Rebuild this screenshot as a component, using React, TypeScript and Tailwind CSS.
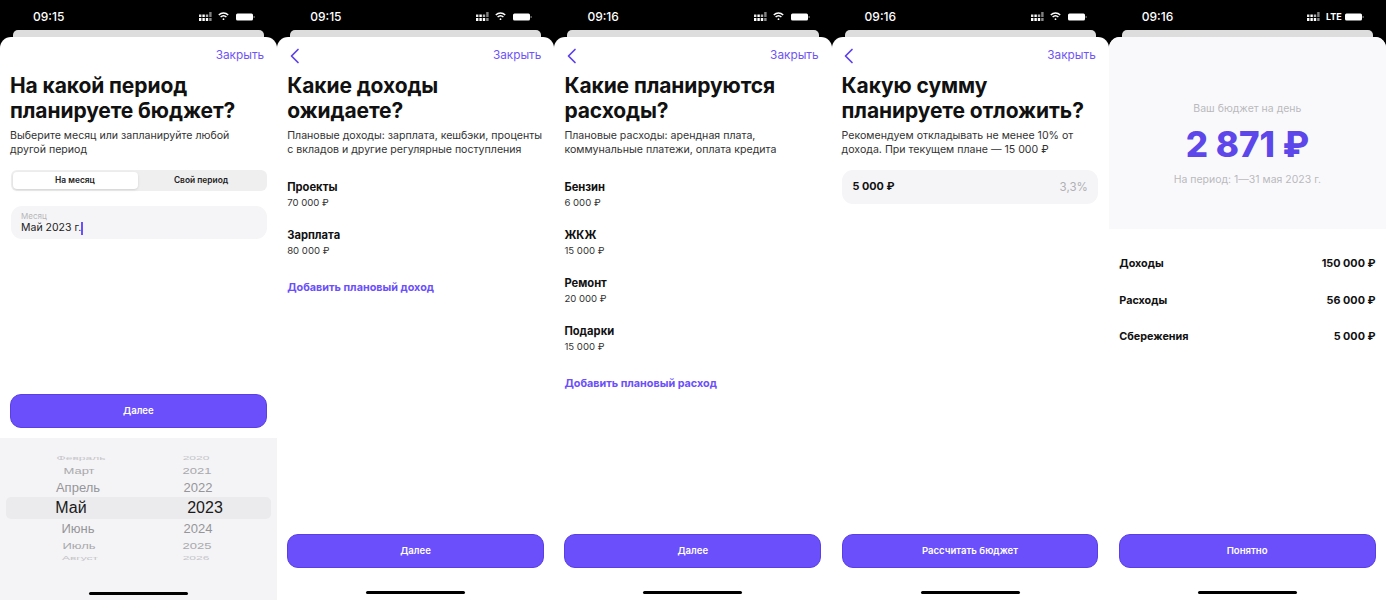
// App.tsx
import React from "react";

const SignalDots = () => (
  <svg width="14" height="10" viewBox="0 0 14 10" fill="#fff">
    <rect x="0" y="6" width="2.4" height="3" />
    <rect x="3.4" y="6" width="2.4" height="3" />
    <rect x="6.8" y="6" width="2.4" height="3" />
    <rect x="10.2" y="6" width="2.4" height="3" opacity="0.55" />
    <rect x="0" y="2.5" width="2.4" height="2.5" opacity="0.9" />
    <rect x="3.4" y="2.5" width="2.4" height="2.5" />
    <rect x="6.8" y="2.5" width="2.4" height="2.5" opacity="0.7" />
    <rect x="10.2" y="0" width="2.4" height="5" opacity="0.5" />
  </svg>
);

const Wifi = () => (
  <svg width="11" height="9" viewBox="0 0 11 9" fill="none" stroke="#fff" strokeWidth="1.5">
    <path d="M0.8 3 C3.5 0.4 7.5 0.4 10.2 3" />
    <path d="M2.6 5 C4.3 3.5 6.7 3.5 8.4 5" />
    <circle cx="5.5" cy="7.2" r="0.9" fill="#fff" stroke="none" />
  </svg>
);

const Battery = () => (
  <svg width="19" height="8" viewBox="0 0 19 8">
    <rect x="0" y="0.5" width="17" height="7" rx="1.5" fill="#fff" />
    <rect x="17.6" y="3" width="1" height="2" fill="#888" />
  </svg>
);

const StatusBar = ({ time, lte = false }: { time: string; lte?: boolean }) => (
  <div className="h-[30px] flex items-center pt-[3px] pl-[33px] pr-[22px] text-white">
    <span className="text-[12px] font-medium w-[167px]">{time}</span>
    <div className="flex items-center">
      <SignalDots />
      {lte ? (
        <span className="ml-[5px] mr-[5px] text-[9px] font-bold w-[14px]">LTE</span>
      ) : (
        <span className="ml-[5px] mr-[7px]">
          <Wifi />
        </span>
      )}
      <Battery />
    </div>
  </div>
);

const HomeBar = () => <div className="h-[3px] w-[99px] rounded-full bg-black mx-auto" />;

const Header = ({ back = true }: { back?: boolean }) => (
  <div className="h-[36px] flex items-center justify-between pl-[11.5px] pr-[13px] pt-[1px] shrink-0">
    {back ? (
      <svg width="12" height="16" viewBox="0 0 12 16" fill="none" stroke="#5b3ff0" strokeWidth="1.7" strokeLinecap="round" strokeLinejoin="round">
        <path d="M9 1.5 L2.5 8 L9 14.5" />
      </svg>
    ) : (
      <span />
    )}
    <span className="text-[11.8px] text-[#6f55f5]">Закрыть</span>
  </div>
);

const Title = ({ lines, sub }: { lines: string[]; sub: string[] }) => (
  <div className="px-[10px] whitespace-nowrap">
    <div className="text-[21px] leading-[25px] font-bold text-[#111] tracking-[-0.1px]">
      {lines.map((l) => (
        <div key={l}>{l}</div>
      ))}
    </div>
    <div className="mt-[6px] text-[10.6px] leading-[14px] text-[#333]">
      {sub.map((l) => (
        <div key={l}>{l}</div>
      ))}
    </div>
  </div>
);

const MainButton = ({ label }: { label: string }) => (
  <button className="ml-[10px] mr-[10.5px] h-[34px] shrink-0 rounded-[11px] bg-[#6b4ffb] border border-[#5a3ee6] text-white text-[9.6px] font-semibold">
    {label}
  </button>
);

const Budget = ({ title, amount }: { title: string; amount: string }) => (
  <div className="h-[48px]">
    <div className="text-[11.2px] leading-[15px] font-bold text-[#111]">{title}</div>
    <div className="text-[9.6px] leading-[15px] text-[#333]">{amount}</div>
  </div>
);

const Screen = ({ time, lte, children }: { time: string; lte?: boolean; children: React.ReactNode }) => (
  <div className="h-[600px] flex flex-col min-w-0">
    <StatusBar time={time} lte={lte} />
    <div className="h-[7px] mx-[13px] rounded-t-[5px] bg-[#dddddd] shrink-0" />
    <div className="flex-1 flex flex-col bg-white rounded-t-[11px] min-h-0">{children}</div>
  </div>
);

const BottomArea = ({ label }: { label: string }) => (
  <div className="mt-auto flex flex-col">
    <MainButton label={label} />
    <div className="h-[32px] flex items-end pb-[6px]">
      <HomeBar />
    </div>
  </div>
);

const pickerRows = [
  { m: "Февраль", y: "2020", cls: "h-[10px] text-[12px] text-[#c5c5c9] scale-y-50", mw: "w-[150px]", yw: "w-[80px]" },
  { m: "Март", y: "2021", cls: "h-[15px] text-[13px] text-[#a9a9ad] scale-y-75", mw: "w-[146px]", yw: "w-[90px]" },
  { m: "Апрель", y: "2022", cls: "h-[19px] text-[13px] text-[#96969a]", mw: "w-[144px]", yw: "w-[96px]" },
  { m: "Май", y: "2023", cls: "h-[22px] text-[16px] text-[#1a1a1a] rounded-[5px] bg-[#ebebed]", mw: "w-[130px]", yw: "w-[126px]" },
  { m: "Июнь", y: "2024", cls: "h-[18px] text-[13px] text-[#96969a]", mw: "w-[144px]", yw: "w-[96px]" },
  { m: "Июль", y: "2025", cls: "h-[17px] text-[13px] text-[#a9a9ad] scale-y-75", mw: "w-[146px]", yw: "w-[90px]" },
  { m: "Август", y: "2026", cls: "h-[8px] text-[12px] text-[#c5c5c9] scale-y-50", mw: "w-[148px]", yw: "w-[84px]" },
];

const Picker = () => (
  <div className="h-[162px] mt-[10px] bg-[#f4f4f6] flex flex-col pt-[15px] font-['Liberation_Sans',sans-serif]">
    {pickerRows.map((r) => (
      <div key={r.m} className={`flex items-center leading-none mx-[6px] ${r.cls}`}>
        <span className={`shrink-0 text-center ${r.mw}`}>{r.m}</span>
        <span className={`shrink-0 text-center ${r.yw} ${r.m === "Май" ? "ml-[6px]" : ""}`}>{r.y}</span>
      </div>
    ))}
    <div className="mt-auto pb-[5px]">
      <HomeBar />
    </div>
  </div>
);

const AddLink = ({ label }: { label: string }) => (
  <div className="mt-[4px] text-[10.8px] font-bold text-[#6b4ffb]">{label}</div>
);

export default function App() {
  return (
    <div className="w-[1386px] h-[600px] overflow-hidden bg-black grid grid-cols-5 font-['Inter',sans-serif]">
      {/* Шаг 1 */}
      <Screen time="09:15">
        <Header back={false} />
        <Title
          lines={["На какой период", "планируете бюджет?"]}
          sub={["Выберите месяц или запланируйте любой", "другой период"]}
        />
        <div className="mx-[10.5px] mt-[13px] h-[21px] rounded-[6px] bg-[#efeff0] flex p-[2px] text-[8.4px] font-semibold text-[#222] shrink-0">
          <div className="w-[125px] rounded-[4px] bg-white shadow-sm flex items-center justify-center">На месяц</div>
          <div className="flex-1 flex items-center justify-center">Свой период</div>
        </div>
        <div className="mx-[10.5px] mt-[15px] h-[33px] rounded-[11px] bg-[#f5f5f7] px-[10.5px] pt-[5px] shrink-0">
          <div className="text-[8px] leading-[10px] text-[#b5b5b8]">Месяц</div>
          <div className="text-[10.5px] leading-[14px] text-[#222] flex items-center">
            Май 2023 г.
            <span className="inline-block w-[1.5px] h-[13px] bg-[#6b4ffb]" />
          </div>
        </div>
        <div className="mt-auto flex flex-col">
          <MainButton label="Далее" />
          <Picker />
        </div>
      </Screen>

      {/* Шаг 2 */}
      <Screen time="09:15">
        <Header />
        <Title
          lines={["Какие доходы", "ожидаете?"]}
          sub={["Плановые доходы: зарплата, кешбэки, проценты", "с вкладов и другие регулярные поступления"]}
        />
        <div className="px-[10px] mt-[23px] flex flex-col">
          <Budget title="Проекты" amount="70 000 ₽" />
          <Budget title="Зарплата" amount="80 000 ₽" />
          <AddLink label="Добавить плановый доход" />
        </div>
        <BottomArea label="Далее" />
      </Screen>

      {/* Шаг 3 */}
      <Screen time="09:16">
        <Header />
        <Title
          lines={["Какие планируются", "расходы?"]}
          sub={["Плановые расходы: арендная плата,", "коммунальные платежи, оплата кредита"]}
        />
        <div className="px-[10px] mt-[23px] flex flex-col">
          <Budget title="Бензин" amount="6 000 ₽" />
          <Budget title="ЖКЖ" amount="15 000 ₽" />
          <Budget title="Ремонт" amount="20 000 ₽" />
          <Budget title="Подарки" amount="15 000 ₽" />
          <AddLink label="Добавить плановый расход" />
        </div>
        <BottomArea label="Далее" />
      </Screen>

      {/* Шаг 4 */}
      <Screen time="09:16">
        <Header />
        <Title
          lines={["Какую сумму", "планируете отложить?"]}
          sub={["Рекомендуем откладывать не менее 10% от", "дохода. При текущем плане — 15 000 ₽"]}
        />
        <div className="mx-[10.5px] mt-[13px] h-[34px] rounded-[11px] bg-[#f5f5f7] px-[10.5px] pt-[1px] flex items-center justify-between shrink-0">
          <span className="text-[10.8px] font-bold text-[#111]">5 000 ₽</span>
          <span className="text-[11.5px] text-[#b0b0b4]">3,3%</span>
        </div>
        <BottomArea label="Рассчитать бюджет" />
      </Screen>

      {/* Итог */}
      <Screen time="09:16" lte>
        <div className="h-[192px] shrink-0 rounded-t-[11px] bg-[#f9f9fc] flex flex-col items-center pt-[64px]">
          <div className="text-[10.5px] leading-[15px] text-[#b9b9bd]">Ваш бюджет на день</div>
          <div className="mt-[6px] text-[35px] leading-[44px] font-extrabold text-[#5d46ea]">2 871 ₽</div>
          <div className="mt-[6px] text-[10.5px] leading-[15px] text-[#b9b9bd]">На период: 1—31 мая 2023 г.</div>
        </div>
        <div className="px-[10.5px] mt-[17px] flex flex-col text-[10.8px] font-bold text-[#111]">
          {[
            ["Доходы", "150 000 ₽"],
            ["Расходы", "56 000 ₽"],
            ["Сбережения", "5 000 ₽"],
          ].map(([a, b]) => (
            <div key={a} className="h-[36.5px] flex items-center justify-between">
              <span>{a}</span>
              <span>{b}</span>
            </div>
          ))}
        </div>
        <BottomArea label="Понятно" />
      </Screen>
    </div>
  );
}
